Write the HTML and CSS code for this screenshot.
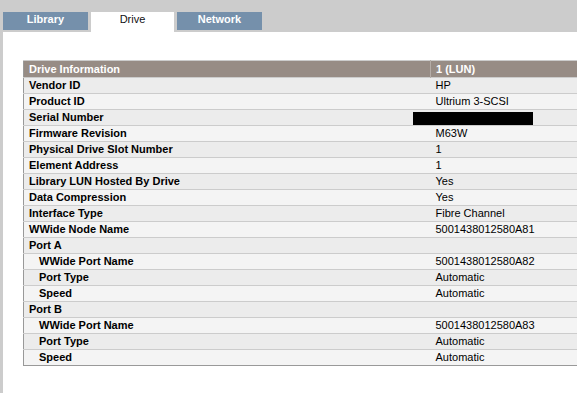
FILE: index.html
```html
<!DOCTYPE html>
<html lang="en">
<head>
    <meta charset="UTF-8">
    <title>Drive</title>
    <link rel="stylesheet" href="styles.css">
</head>
<body>
    <div class="tabbar">
        <div class="tab">Library</div>
        <div class="tab active">Drive</div>
        <div class="tab">Network</div>
    </div>

    <div class="content">
        <table class="info">
            <tr class="head">
                <th class="label">Drive Information</th>
                <th class="value">1 (LUN)</th>
            </tr>
            <tr><td class="label">Vendor ID</td><td class="value">HP</td></tr>
            <tr><td class="label">Product ID</td><td class="value">Ultrium 3-SCSI</td></tr>
            <tr><td class="label">Serial Number</td><td class="value"><span class="redact"></span></td></tr>
            <tr><td class="label">Firmware Revision</td><td class="value">M63W</td></tr>
            <tr><td class="label">Physical Drive Slot Number</td><td class="value">1</td></tr>
            <tr><td class="label">Element Address</td><td class="value">1</td></tr>
            <tr><td class="label">Library LUN Hosted By Drive</td><td class="value">Yes</td></tr>
            <tr><td class="label">Data Compression</td><td class="value">Yes</td></tr>
            <tr><td class="label">Interface Type</td><td class="value">Fibre Channel</td></tr>
            <tr><td class="label">WWide Node Name</td><td class="value">5001438012580A81</td></tr>
            <tr><td class="label">Port A</td><td class="value"></td></tr>
            <tr><td class="label sub">WWide Port Name</td><td class="value">5001438012580A82</td></tr>
            <tr><td class="label sub">Port Type</td><td class="value">Automatic</td></tr>
            <tr><td class="label sub">Speed</td><td class="value">Automatic</td></tr>
            <tr><td class="label">Port B</td><td class="value"></td></tr>
            <tr><td class="label sub">WWide Port Name</td><td class="value">5001438012580A83</td></tr>
            <tr><td class="label sub">Port Type</td><td class="value">Automatic</td></tr>
            <tr><td class="label sub">Speed</td><td class="value">Automatic</td></tr>
        </table>
    </div>
</body>
</html>
```

FILE: styles.css
```css
* {
    margin: 0;
    padding: 0;
    box-sizing: border-box;
}

html, body {
    height: 100%;
    overflow: hidden;
}

body {
    background-color: #cccccc;
    font-family: 'Liberation Sans', Arial, sans-serif;
    font-size: 11px;
    color: #000;
    display: flex;
    flex-direction: column;
}

.tabbar {
    height: 32px;
    display: flex;
    align-items: flex-start;
    gap: 3px;
    padding: 12px 0 0 3px;
}

.tab {
    width: 85px;
    height: 18px;
    line-height: 15px;
    background-color: #7590ab;
    color: #fff;
    font-weight: bold;
    text-align: center;
}

.tab.active {
    width: 83px;
    height: 20px;
    background-color: #fff;
    color: #111;
    font-weight: normal;
}

.content {
    flex: 1;
    margin-left: 3px;
    background-color: #fff;
    padding: 28px 0 0 20px;
    overflow: hidden;
}

.info {
    width: 620px;
    border-collapse: collapse;
    border: 1px solid #999;
}

.info tr {
    height: 16px;
    border-top: 1px solid #cccccc;
}

.info tr:nth-child(even) {
    background-color: #ececec;
}

.info tr:nth-child(odd) {
    background-color: #f4f4f4;
}

.info td, .info th {
    padding: 0 5px;
    line-height: 15px;
    text-align: left;
    white-space: nowrap;
}

.info .label {
    width: 407px;
    font-weight: bold;
}

.info .label.sub {
    padding-left: 15px;
}

.info tr.head {
    height: 17px;
    background-color: #978c85;
    color: #fff;
}

.info tr.head th {
    font-weight: bold;
}

.info tr.head th.value {
    border-left: 1px solid #b5ada8;
}

.redact {
    display: inline-block;
    width: 120px;
    height: 13px;
    margin-left: -23px;
    vertical-align: middle;
    background-color: #000;
}
```
